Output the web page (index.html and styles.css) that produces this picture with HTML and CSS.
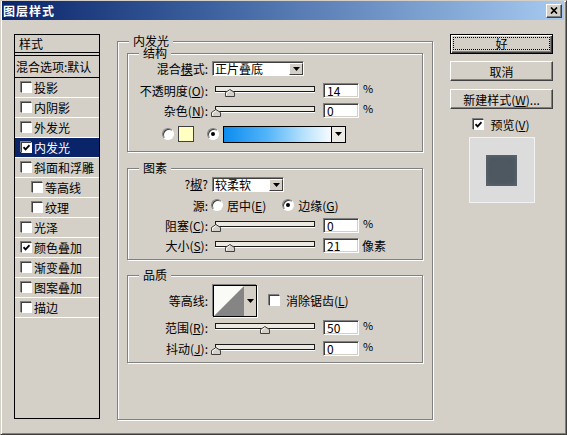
FILE: index.html
```html
<!DOCTYPE html>
<html lang="zh-CN">
<head>
    <meta charset="UTF-8">
    <title>图层样式</title>
    <link rel="stylesheet" href="styles.css">
</head>
<body>

<div class="window">
    <div class="titlebar">
        <span class="title">图层样式</span>
        <span class="close-btn">
            <svg width="8" height="7" viewBox="0 0 8 7"><path d="M1 0.5L7 6.5M7 0.5L1 6.5" stroke="#000" stroke-width="1.7"/></svg>
        </span>
    </div>

    <div class="client">
        <!-- liste des styles -->
        <div class="style-list">
            <div class="list-head">样式</div>
            <div class="list-blend">混合选项:默认</div>
            <div class="list-item"><span class="check"></span>投影</div>
            <div class="list-item"><span class="check"></span>内阴影</div>
            <div class="list-item"><span class="check"></span>外发光</div>
            <div class="list-item selected"><span class="check"><svg width="7" height="7" viewBox="0 0 7 7"><path d="M0.5 3.2L2.6 5.4L6.5 1.2" fill="none" stroke="#000" stroke-width="1.8"/></svg></span>内发光</div>
            <div class="list-item"><span class="check"></span>斜面和浮雕</div>
            <div class="list-item sub"><span class="check"></span>等高线</div>
            <div class="list-item sub"><span class="check"></span>纹理</div>
            <div class="list-item"><span class="check"></span>光泽</div>
            <div class="list-item"><span class="check"><svg width="7" height="7" viewBox="0 0 7 7"><path d="M0.5 3.2L2.6 5.4L6.5 1.2" fill="none" stroke="#000" stroke-width="1.8"/></svg></span>颜色叠加</div>
            <div class="list-item"><span class="check"></span>渐变叠加</div>
            <div class="list-item"><span class="check"></span>图案叠加</div>
            <div class="list-item"><span class="check"></span>描边</div>
        </div>

        <!-- panneau inner glow -->
        <div class="group outer">
            <div class="group-title">内发光</div>

            <div class="group inner struct">
                <div class="group-title">结构</div>
                <div class="row top">
                    <span class="label">混合<u>模</u>式:</span>
                    <span class="select blend-select">
                        <span class="select-text">正片叠底</span>
                        <span class="select-btn"><svg width="7" height="4" viewBox="0 0 7 4"><path d="M0 0h7L3.5 4z"/></svg></span>
                    </span>
                </div>
                <div class="row">
                    <span class="label">不透明度(<u>O</u>):</span>
                    <span class="slider"><span class="track"></span><svg class="thumb" style="left:14px" width="10" height="8" viewBox="0 0 10 8"><path d="M0.5 7.5V3.5L5 0.5L9.5 3.5V7.5Z" fill="#d4d0c8" stroke="#404040"/><path d="M1.5 6.5V4L5 1.7" fill="none" stroke="#fff"/></svg></span>
                    <span class="num">14</span>
                    <span class="unit">%</span>
                </div>
                <div class="row">
                    <span class="label">杂色(<u>N</u>):</span>
                    <span class="slider"><span class="track"></span><svg class="thumb" style="left:0px" width="10" height="8" viewBox="0 0 10 8"><path d="M0.5 7.5V3.5L5 0.5L9.5 3.5V7.5Z" fill="#d4d0c8" stroke="#404040"/><path d="M1.5 6.5V4L5 1.7" fill="none" stroke="#fff"/></svg></span>
                    <span class="num">0</span>
                    <span class="unit">%</span>
                </div>
                <div class="row color-row">
                    <span class="radio"></span>
                    <span class="swatch"></span>
                    <span class="radio on"></span>
                    <span class="gradient">
                        <span class="gradient-fill"></span>
                        <span class="gradient-btn"><svg width="7" height="4" viewBox="0 0 7 4"><path d="M0 0h7L3.5 4z"/></svg></span>
                    </span>
                </div>
            </div>

            <div class="group inner pixels">
                <div class="group-title">图素</div>
                <div class="row top">
                    <span class="label">?<u>椒</u>?</span>
                    <span class="select method-select">
                        <span class="select-text">较柔软</span>
                        <span class="select-btn"><svg width="7" height="4" viewBox="0 0 7 4"><path d="M0 0h7L3.5 4z"/></svg></span>
                    </span>
                </div>
                <div class="row">
                    <span class="label">源:</span>
                    <span class="radio"></span>
                    <span class="radio-text">居中(<u>E</u>)</span>
                    <span class="radio on"></span>
                    <span class="radio-text">边缘(<u>G</u>)</span>
                </div>
                <div class="row">
                    <span class="label">阻塞(<u>C</u>):</span>
                    <span class="slider"><span class="track"></span><svg class="thumb" style="left:0px" width="10" height="8" viewBox="0 0 10 8"><path d="M0.5 7.5V3.5L5 0.5L9.5 3.5V7.5Z" fill="#d4d0c8" stroke="#404040"/><path d="M1.5 6.5V4L5 1.7" fill="none" stroke="#fff"/></svg></span>
                    <span class="num">0</span>
                    <span class="unit">%</span>
                </div>
                <div class="row">
                    <span class="label">大小(<u>S</u>):</span>
                    <span class="slider"><span class="track"></span><svg class="thumb" style="left:14px" width="10" height="8" viewBox="0 0 10 8"><path d="M0.5 7.5V3.5L5 0.5L9.5 3.5V7.5Z" fill="#d4d0c8" stroke="#404040"/><path d="M1.5 6.5V4L5 1.7" fill="none" stroke="#fff"/></svg></span>
                    <span class="num">21</span>
                    <span class="unit px">像素</span>
                </div>
            </div>

            <div class="group inner quality">
                <div class="group-title">品质</div>
                <div class="row contour-row">
                    <span class="label">等高线:</span>
                    <span class="contour">
                        <svg width="30" height="30" viewBox="0 0 30 30"><rect width="30" height="30" fill="#fafaf6"/><path d="M0 30L30 0V30Z" fill="#858585"/></svg>
                        <span class="contour-btn"><svg width="7" height="4" viewBox="0 0 7 4"><path d="M0 0h7L3.5 4z"/></svg></span>
                    </span>
                    <span class="check aa"></span>
                    <span class="check-text">消除锯齿(<u>L</u>)</span>
                </div>
                <div class="row">
                    <span class="label">范围(<u>R</u>):</span>
                    <span class="slider"><span class="track"></span><svg class="thumb" style="left:49px" width="10" height="8" viewBox="0 0 10 8"><path d="M0.5 7.5V3.5L5 0.5L9.5 3.5V7.5Z" fill="#d4d0c8" stroke="#404040"/><path d="M1.5 6.5V4L5 1.7" fill="none" stroke="#fff"/></svg></span>
                    <span class="num">50</span>
                    <span class="unit">%</span>
                </div>
                <div class="row last">
                    <span class="label">抖动(<u>J</u>):</span>
                    <span class="slider"><span class="track"></span><svg class="thumb" style="left:0px" width="10" height="8" viewBox="0 0 10 8"><path d="M0.5 7.5V3.5L5 0.5L9.5 3.5V7.5Z" fill="#d4d0c8" stroke="#404040"/><path d="M1.5 6.5V4L5 1.7" fill="none" stroke="#fff"/></svg></span>
                    <span class="num">0</span>
                    <span class="unit">%</span>
                </div>
            </div>
        </div>

        <!-- boutons -->
        <div class="side">
            <div class="btn default"><span class="focus">好</span></div>
            <div class="btn cancel">取消</div>
            <div class="btn">新建样式(<u>W</u>)...</div>
            <div class="preview-check">
                <span class="check"><svg width="7" height="7" viewBox="0 0 7 7"><path d="M0.5 3.2L2.6 5.4L6.5 1.2" fill="none" stroke="#000" stroke-width="1.8"/></svg></span>
                <span>预览(<u>V</u>)</span>
            </div>
            <div class="preview"><span class="preview-swatch"></span></div>
        </div>
    </div>
</div>

</body>
</html>
```

FILE: styles.css
```css
body {
    margin: 0;
    background: #d4d0c8;
    font-family: "Noto Sans CJK SC", "Liberation Sans", sans-serif;
    font-size: 12px;
    color: #000;
}

u {
    text-decoration: underline;
    text-underline-offset: 1px;
}

.window {
    width: 567px;
    height: 435px;
    box-sizing: border-box;
    background: #d4d0c8;
    border: 1px solid;
    border-color: #d4d0c8 #404040 #404040 #d4d0c8;
    box-shadow: inset 1px 1px 0 #fff, inset -1px -1px 0 #808080;
}

/* barre de titre */
.titlebar {
    height: 19px;
    margin: 0 2px 0 1px;
    padding: 0 2px 0 1px;
    display: flex;
    align-items: center;
    justify-content: space-between;
    background: linear-gradient(to right, #0a246a, #3a5e9c 35%, #a6caf0);
}

.title {
    color: #fff;
    font-weight: bold;
    letter-spacing: 1px;
}

.close-btn {
    width: 16px;
    height: 14px;
    box-sizing: border-box;
    display: flex;
    align-items: center;
    justify-content: center;
    background: #d4d0c8;
    border: 1px solid;
    border-color: #fff #404040 #404040 #fff;
    box-shadow: inset -1px -1px 0 #808080;
}

.client {
    display: flex;
    align-items: flex-start;
}

/* liste de gauche */
.style-list {
    width: 86px;
    height: 385px;
    box-sizing: border-box;
    margin: 14px 0 0 13px;
    border: 1px solid #000;
}

.list-head {
    height: 17px;
    line-height: 17px;
    padding-left: 4px;
    border-bottom: 1px solid #000;
}

.list-blend {
    height: 21px;
    line-height: 21px;
    margin-top: 2px;
    padding-left: 1px;
    border-top: 1px solid #000;
    border-bottom: 1px solid #000;
    white-space: nowrap;
}

.list-item {
    height: 19px;
    display: flex;
    align-items: center;
    padding-left: 6px;
    border-bottom: 1px solid #fff;
    white-space: nowrap;
}

.list-item.sub {
    padding-left: 17px;
}

.list-item.selected {
    background: #0a246a;
    color: #fff;
}

.check {
    width: 11px;
    height: 11px;
    box-sizing: border-box;
    flex: none;
    display: flex;
    align-items: center;
    justify-content: center;
    background: #fff;
    border: 1px solid;
    border-color: #404040 #fff #fff #404040;
    box-shadow: -1px -1px 0 #808080;
}

.list-item .check {
    margin-right: 2px;
}

/* group boxes */
.group {
    border: 1px solid #808080;
    box-shadow: inset 1px 1px 0 #fff, 1px 1px 0 #fff;
}

.group-title {
    display: table;
    height: 12px;
    line-height: 12px;
    margin: -7px 0 1px 11px;
    padding: 0 4px;
    background: #d4d0c8;
}

.outer {
    width: 316px;
    height: 379px;
    box-sizing: border-box;
    margin: 21px 0 0 17px;
}

.inner {
    margin: 0 9px;
}

.struct {
    margin-top: 6px;
    padding-bottom: 7px;
}

.pixels {
    margin-top: 16px;
    padding-bottom: 4px;
}

.quality {
    margin-top: 15px;
    padding-bottom: 4px;
}

.row {
    height: 20px;
    display: flex;
    align-items: center;
    white-space: nowrap;
}

.row.top {
    align-items: flex-start;
}

.label {
    width: 80px;
    flex: none;
    margin-right: 3px;
    text-align: right;
}

.row.top .label {
    line-height: 18px;
}

/* combobox */
.select {
    height: 15px;
    box-sizing: border-box;
    display: flex;
    margin: 1px 0 0 1px;
    background: #fff;
    border: 1px solid;
    border-color: #808080 #fff #fff #808080;
    box-shadow: inset 1px 1px 0 #404040;
}

.blend-select {
    width: 92px;
}

.method-select {
    width: 72px;
    margin-top: 2px;
}

.select-text {
    flex: 1;
    padding: 1px 0 0 2px;
    line-height: 12px;
}

.select-btn,
.gradient-btn,
.contour-btn {
    width: 14px;
    flex: none;
    display: flex;
    align-items: center;
    justify-content: center;
    box-sizing: border-box;
    background: #d4d0c8;
    border: 1px solid;
    border-color: #fff #404040 #404040 #fff;
}

.select-btn {
    margin: 1px 0 0 0;
    height: 12px;
}

/* slider */
.slider {
    position: relative;
    width: 100px;
    height: 20px;
    padding: 0 4px;
    flex: none;
}

.track {
    display: block;
    height: 6px;
    margin-top: 6px;
    box-sizing: border-box;
    background: #ece9e0;
    border: 1px solid #1a1a1a;
    box-shadow: 0 1px 0 #fff;
}

.thumb {
    position: absolute;
    top: 9px;
}

.num {
    width: 36px;
    height: 15px;
    box-sizing: border-box;
    margin-left: 4px;
    padding-left: 3px;
    line-height: 13px;
    background: #fff;
    border: 1px solid;
    border-color: #808080 #fff #fff #808080;
    box-shadow: inset 1px 1px 0 #404040, inset -1px -1px 0 #d4d0c8;
}

.unit {
    margin-left: 4px;
    font-size: 11px;
    margin-bottom: 4px;
}

.unit.px {
    font-size: 12px;
    margin: 0 0 0 3px;
}

/* radios */
.radio {
    width: 12px;
    height: 12px;
    box-sizing: border-box;
    flex: none;
    display: flex;
    align-items: center;
    justify-content: center;
    border-radius: 50%;
    background: #fff;
    border: 1px solid;
    border-color: #808080 #fff #fff #808080;
    box-shadow: inset 1px 1px 0 #404040;
}

.radio.on::after {
    content: "";
    width: 4px;
    height: 4px;
    border-radius: 50%;
    background: #000;
}

.radio-text {
    margin: 0 16px 0 4px;
}

.color-row {
    margin-top: 4px;
    padding-left: 34px;
}

.swatch {
    width: 16px;
    height: 16px;
    box-sizing: border-box;
    margin: 0 13px 0 4px;
    background: #ffffc2;
    border: 1px solid #404040;
}

.gradient {
    width: 123px;
    height: 17px;
    box-sizing: border-box;
    display: flex;
    margin-left: 4px;
    border: 1px solid #000;
}

.gradient-fill {
    flex: 1;
    background: linear-gradient(to right, #0c8cf0, #52b4f8 40%, #b8e2fc 75%, #f6fbff);
}

.gradient-btn {
    border-color: #000;
    border-width: 0 0 0 1px;
    background: #ecebe6;
}

/* contour */
.contour-row {
    height: 33px;
    margin-top: 3px;
}

.contour {
    display: flex;
    height: 32px;
    box-sizing: border-box;
    margin-left: 2px;
    border: 1px solid #000;
    box-shadow: -1px -1px 0 #808080, 1px 1px 0 #fff;
}

.contour-btn {
    width: 12px;
    border: none;
    background: #d4d0c8;
}

.check.aa {
    margin-left: 12px;
}

.check-text {
    margin-left: 6px;
}

.row.last {
    margin-top: 1px;
}

/* colonne de droite */
.side {
    width: 103px;
    margin: 14px 0 0 17px;
}

.btn {
    height: 20px;
    box-sizing: border-box;
    display: flex;
    align-items: center;
    justify-content: center;
    background: #d4d0c8;
    border: 1px solid;
    border-color: #fff #404040 #404040 #fff;
    box-shadow: inset -1px -1px 0 #808080;
}

.btn.default {
    margin-bottom: 7px;
    padding: 2px 2px 3px 2px;
    border-color: #000;
    box-shadow: inset 1px 1px 0 #fff, inset -1px -1px 0 #404040, inset -2px -2px 0 #808080;
}

.btn.cancel {
    margin-bottom: 8px;
}

.focus {
    flex: 1;
    align-self: stretch;
    display: flex;
    align-items: center;
    justify-content: center;
    border: 1px dotted #000;
}

.preview-check {
    height: 12px;
    margin-top: 9px;
    display: flex;
    align-items: center;
    justify-content: center;
    gap: 6px;
}

.preview {
    width: 66px;
    height: 66px;
    box-sizing: border-box;
    margin: 7px auto 0;
    display: flex;
    align-items: center;
    justify-content: center;
    background: #dcdcdc;
    border: 1px solid #f2f2f2;
}

.preview-swatch {
    width: 31px;
    height: 31px;
    background: #4d5861;
    box-shadow: inset 0 0 5px rgba(120, 130, 130, 0.5);
}
```
